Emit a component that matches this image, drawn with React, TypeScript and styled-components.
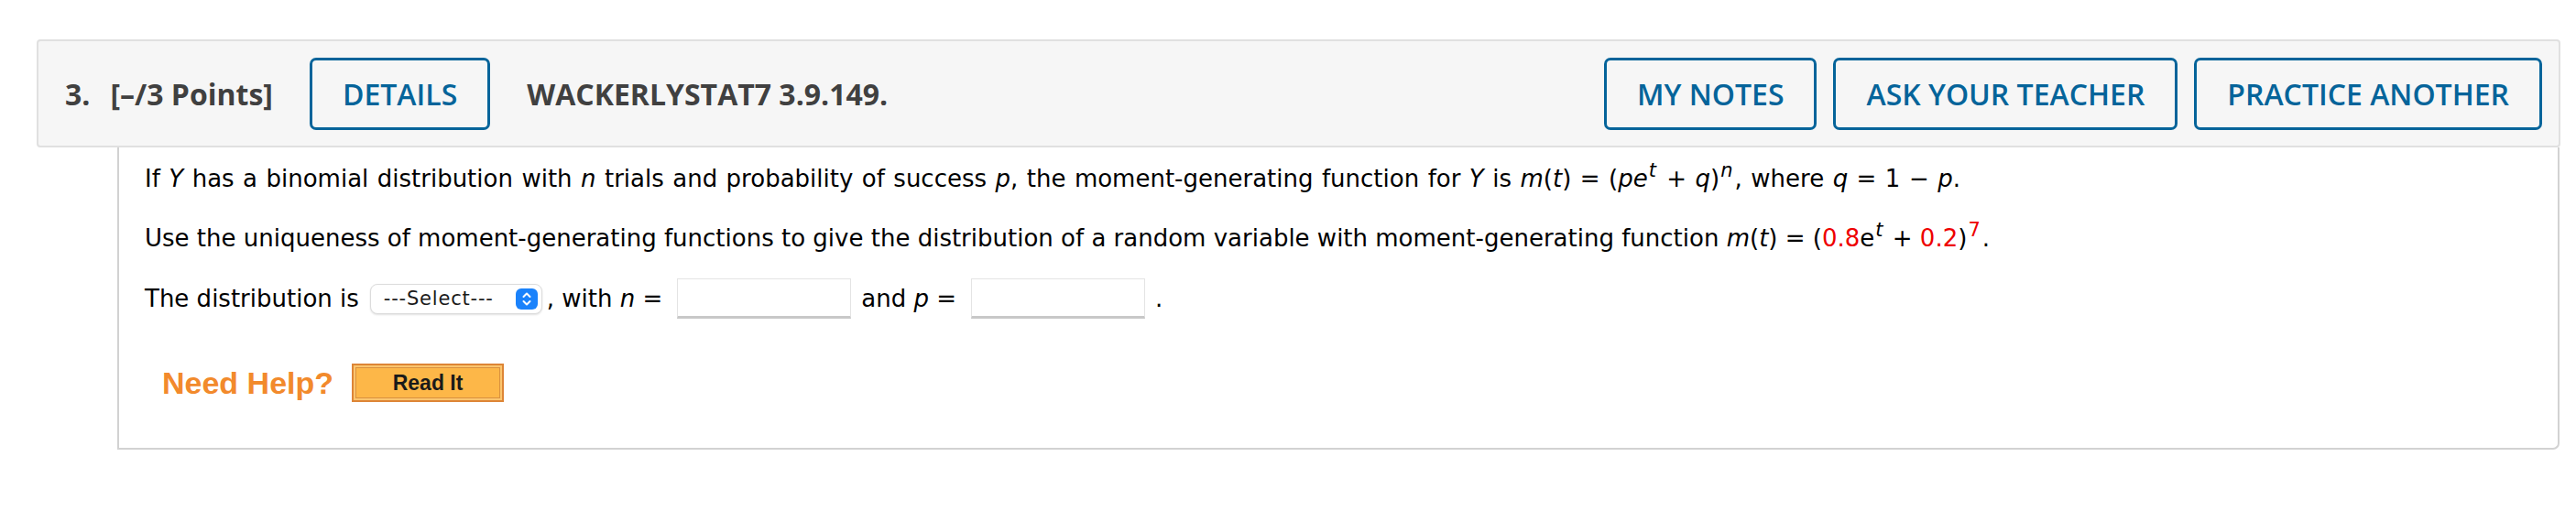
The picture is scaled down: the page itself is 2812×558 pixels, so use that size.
import React from "react";
import styled, { createGlobalStyle } from "styled-components";

const Global = createGlobalStyle`
  html, body { margin: 0; padding: 0; background: #ffffff; }
  * { box-sizing: border-box; }
`;

const Page = styled.div`
  padding: 43px 17px 0 40px;
`;

const Header = styled.div`
  display: flex;
  align-items: center;
  height: 118px;
  background: #f6f6f6;
  border: 2px solid #e0e0e0;
  border-radius: 4px;
  padding: 0 18px 0 29px;
  font-family: "Open Sans", "DejaVu Sans", sans-serif;
  color: #404040;
`;

const HeadText = styled.span<{ $left?: number; $right?: number }>`
  font-size: 32px;
  font-weight: 700;
  margin-left: ${(p) => p.$left ?? 0}px;
  margin-right: ${(p) => p.$right ?? 0}px;
  white-space: nowrap;
`;

const Spacer = styled.div`
  flex: 1;
`;

const ButtonGroup = styled.div`
  display: flex;
  gap: 18px;
`;

const OutlineButton = styled.button`
  height: 79px;
  padding: 0 33px;
  border: 3px solid #05649a;
  border-radius: 7px;
  background: transparent;
  color: #05649a;
  font-family: "Open Sans", "DejaVu Sans", sans-serif;
  font-size: 32px;
  font-weight: 600;
  white-space: nowrap;
  cursor: pointer;
`;

const Content = styled.div`
  margin: 0 1px 0 88px;
  border: 2px solid #d2d2d2;
  border-top: none;
  border-bottom-right-radius: 7px;
  padding: 14px 20px 50px 28px;
  font-family: "DejaVu Sans", Verdana, sans-serif;
  font-size: 26px;
  color: #000;
`;

const Para = styled.p<{ $after: number; $wordGap?: number }>`
  margin: 0 0 ${(p) => p.$after}px 0;
  line-height: 40px;
  white-space: nowrap;
  word-spacing: ${(p) => p.$wordGap ?? 0}px;
`;

const AnswerRow = styled.div`
  display: flex;
  align-items: center;
  height: 44px;
  white-space: pre;
`;

const Red = styled.span`
  color: #ee0000;
`;

const Sup = styled.sup`
  font-size: 21px;
  line-height: 0;
  vertical-align: 11px;
  margin: 0 2px 0 1px;
`;

const SelectBox = styled.div`
  display: flex;
  align-items: center;
  justify-content: space-between;
  width: 188px;
  height: 33px;
  margin: 0 5px 0 12px;
  padding: 0 4px 0 14px;
  border: 1px solid #dcdcdc;
  border-radius: 8px;
  background: #fff;
  box-shadow: 0 1px 2px rgba(0, 0, 0, 0.12);
  font-family: "DejaVu Sans", sans-serif;
  font-size: 21px;
  letter-spacing: 0.8px;
  color: #1a1a1a;
`;

const Stepper = styled.span`
  display: flex;
  align-items: center;
  justify-content: center;
  width: 24px;
  height: 23px;
  border-radius: 6px;
  background: #1a82fb;
`;

const TextInput = styled.input`
  width: 190px;
  height: 44px;
  margin: 0 11px 0 16px;
  border: 1px solid #e4e4e4;
  border-bottom: 3px solid #c8c8c8;
  background: #fff;
  outline: none;
`;

const HelpRow = styled.div`
  display: flex;
  align-items: center;
  gap: 20px;
  margin: 49px 0 0 19px;
`;

const NeedHelp = styled.span`
  font-family: "Liberation Sans", Arial, sans-serif;
  font-weight: 700;
  font-size: 34px;
  color: #f28a2c;
`;

const ReadIt = styled.button`
  width: 166px;
  height: 42px;
  border: 2px solid #dd8536;
  background: #fdb748;
  box-shadow: inset 0 0 0 2px #fbc56e, inset 0 0 0 3px #d9913f;
  font-family: "Liberation Sans", Arial, sans-serif;
  font-weight: 700;
  font-size: 23px;
  color: #1a1a1a;
  padding: 0;
  cursor: pointer;
`;

const StepIcon = () => (
  <svg width="12" height="17" viewBox="0 0 12 17" fill="none">
    <path d="M2.5 6 L6 2.5 L9.5 6" stroke="#fff" strokeWidth="2" strokeLinecap="round" strokeLinejoin="round" />
    <path d="M2.5 11 L6 14.5 L9.5 11" stroke="#fff" strokeWidth="2" strokeLinecap="round" strokeLinejoin="round" />
  </svg>
);

export default function App() {
  return (
    <>
      <Global />
      <Page>
        <Header>
          <HeadText $right={22}>3.</HeadText>
          <HeadText $right={40}>[–/3 Points]</HeadText>
          <OutlineButton>DETAILS</OutlineButton>
          <HeadText $left={40}>WACKERLYSTAT7 3.9.149.</HeadText>
          <Spacer />
          <ButtonGroup>
            <OutlineButton>MY NOTES</OutlineButton>
            <OutlineButton>ASK YOUR TEACHER</OutlineButton>
            <OutlineButton>PRACTICE ANOTHER</OutlineButton>
          </ButtonGroup>
        </Header>
        <Content>
          <Para $after={25} $wordGap={1.2}>
            If <i>Y</i> has a binomial distribution with <i>n</i> trials and probability of success <i>p</i>, the
            moment-generating function for <i>Y</i> is <i>m</i>(<i>t</i>) = (<i>pe</i>
            <Sup><i>t</i></Sup> + <i>q</i>)<Sup><i>n</i></Sup>, where <i>q</i> = 1 − <i>p</i>.
          </Para>
          <Para $after={24}>
            Use the uniqueness of moment-generating functions to give the distribution of a random variable with
            moment-generating function <i>m</i>(<i>t</i>) = (<Red>0.8</Red>e<Sup><i>t</i></Sup> + <Red>0.2</Red>)
            <Sup><Red>7</Red></Sup>.
          </Para>
          <AnswerRow>
            <span>The distribution is</span>
            <SelectBox>
              <span>---Select---</span>
              <Stepper>
                <StepIcon />
              </Stepper>
            </SelectBox>
            <span>
              , with <i>n</i> =
            </span>
            <TextInput type="text" />
            <span>
              and <i>p</i> =
            </span>
            <TextInput type="text" />
            <span>.</span>
          </AnswerRow>
          <HelpRow>
            <NeedHelp>Need Help?</NeedHelp>
            <ReadIt>Read It</ReadIt>
          </HelpRow>
        </Content>
      </Page>
    </>
  );
}
